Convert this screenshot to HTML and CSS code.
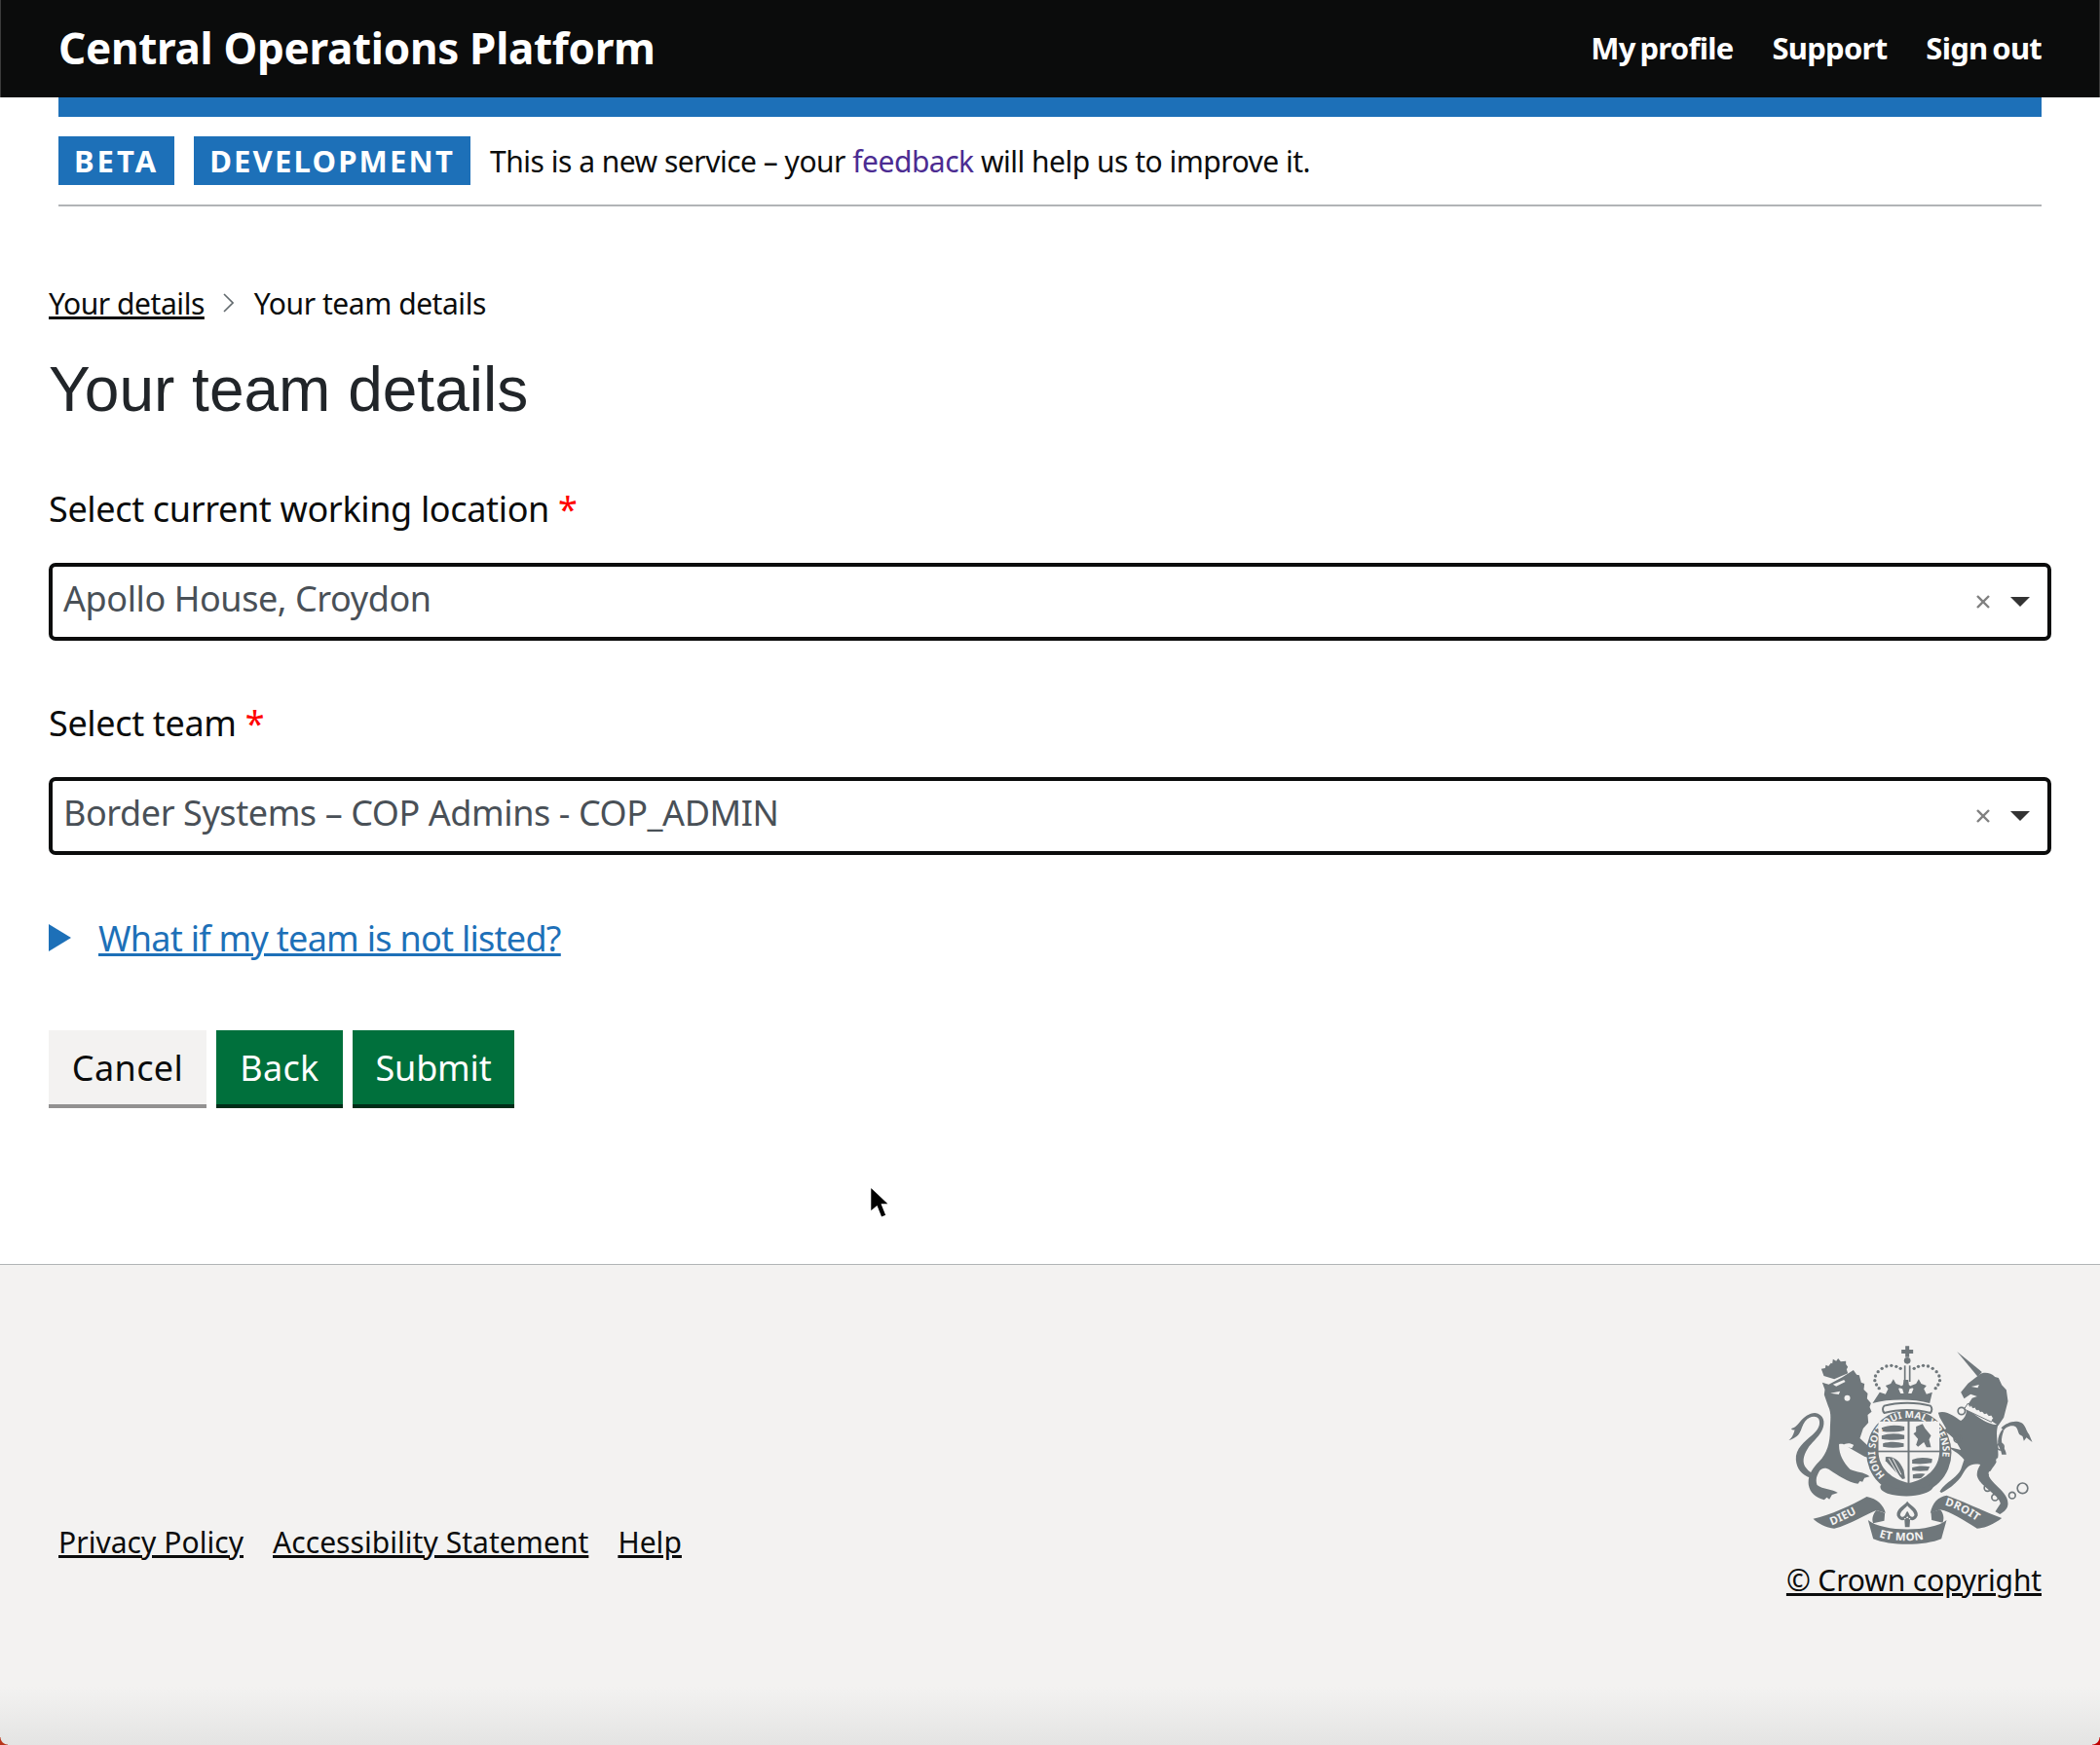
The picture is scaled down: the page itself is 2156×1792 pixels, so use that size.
FILE: index.html
```html
<!DOCTYPE html>
<html lang="en">
<head>
    <meta charset="UTF-8">
    <title>Your team details</title>
    <link rel="stylesheet" href="styles.css">
</head>
<body>
    <header class="site-header">
        <a class="site-title" href="#">Central Operations Platform</a>
        <nav class="site-nav">
            <a href="#">My profile</a>
            <a href="#">Support</a>
            <a href="#">Sign out</a>
        </nav>
    </header>

    <div class="banner-wrap">
        <div class="blue-bar"></div>
        <div class="phase-banner">
            <span class="tag tag-beta">BETA</span>
            <span class="tag">DEVELOPMENT</span>
            <span class="phase-text">This is a new service – your <a href="#">feedback</a> will help us to improve it.</span>
        </div>
    </div>

    <main class="main">
        <div class="breadcrumbs">
            <a href="#">Your details</a>
            <svg class="crumb-arrow" viewBox="0 0 12 20" width="12" height="20"><path d="M2 1l9 9-9 9" fill="none" stroke="#626a6e" stroke-width="1.6"/></svg>
            <span>Your team details</span>
        </div>

        <h1 class="page-title">Your team details</h1>

        <div class="form-group">
            <label class="field-label">Select current working location <span class="required">*</span></label>
            <div class="select-box">
                <span class="select-value">Apollo House, Croydon</span>
                <svg class="select-clear" viewBox="0 0 16 16" width="16" height="16"><path d="M2 2l12 12M14 2L2 14" stroke="#808080" stroke-width="2.4"/></svg>
                <span class="select-caret"></span>
            </div>
        </div>

        <div class="form-group">
            <label class="field-label">Select team <span class="required">*</span></label>
            <div class="select-box">
                <span class="select-value">Border Systems – COP Admins - COP_ADMIN</span>
                <svg class="select-clear" viewBox="0 0 16 16" width="16" height="16"><path d="M2 2l12 12M14 2L2 14" stroke="#808080" stroke-width="2.4"/></svg>
                <span class="select-caret"></span>
            </div>
        </div>

        <div class="details">
            <span class="details-arrow"></span>
            <a href="#">What if my team is not listed?</a>
        </div>

        <div class="button-row">
            <button class="btn btn-grey btn-cancel">Cancel</button>
            <button class="btn btn-green btn-back">Back</button>
            <button class="btn btn-green btn-submit">Submit</button>
        </div>
    </main>

    <footer class="site-footer">
        <div class="footer-links">
            <a href="#">Privacy Policy</a>
            <a href="#">Accessibility Statement</a>
            <a href="#">Help</a>
        </div>
        <div class="footer-crown">
            <svg class="crest" viewBox="50 20 770 630" width="257" height="210">
                <defs>
                    <path id="garterArc" d="M360 432 A104 104 0 1 1 500 432"/>
                    <path id="ribLeft" d="M192 582 C225 570 262 550 300 528"/>
                    <path id="ribMid" d="M338 618 C385 634 465 634 515 614"/>
                    <path id="ribRight" d="M540 520 C580 530 620 556 660 584"/>
                </defs>
                <g fill="#6f777b">
                    <!-- crown -->
                    <path d="M419 30h12v11h12v12h-12v11h-12V53h-12V41h12z"/>
                    <circle cx="425" cy="75" r="10"/>
                    <rect x="415" y="90" width="5" height="50"/>
                    <rect x="430" y="90" width="5" height="50"/>
                    <g class="pearls">
                        <circle cx="404" cy="99" r="5"/><circle cx="391" cy="93" r="5"/><circle cx="376" cy="90" r="5"/><circle cx="361" cy="92" r="5"/><circle cx="347" cy="99" r="5"/><circle cx="335" cy="109" r="5"/><circle cx="327" cy="122" r="5"/><circle cx="325" cy="136" r="5"/><circle cx="330" cy="149" r="5"/><circle cx="338" cy="160" r="5"/>
                        <circle cx="446" cy="99" r="5"/><circle cx="459" cy="93" r="5"/><circle cx="474" cy="90" r="5"/><circle cx="489" cy="92" r="5"/><circle cx="503" cy="99" r="5"/><circle cx="515" cy="109" r="5"/><circle cx="523" cy="122" r="5"/><circle cx="525" cy="136" r="5"/><circle cx="520" cy="149" r="5"/><circle cx="512" cy="160" r="5"/>
                    </g>
                    <path d="M340 172l18 6 8-16-8-10 16-6 8-14 8 14 16 6-8 10 6 14h10l-4-14-12-4 14-8 2-16h14l2 16 14 8-12 4-4 14h10l6-14-8-10 16-6 8-14 8 14 16 6-8 10 8 16 18-6-8 34c-50-14-126-14-176 0z"/>
                    <path d="M354 214c40-12 102-12 142 0 6 6 6 16 0 22-42-12-100-12-142 0-6-6-6-16 0-22z" fill="none" stroke="#6f777b" stroke-width="6"/>

                    <!-- lion crown -->
                    <path d="M168 122l-8-22 12-2 2-10 8 4 8-10 4 2 2-14 10 6 6-8 8 10 16-2 0 10 6 8-4 8 4 12-42 18z"/>
                    <!-- lion body -->
                    <path d="M163 142l20 6 42-22 34-22 10 14 8 2 6 22 10 4-2 18 12 12-2 16 12 14-4 12 6 14-12 10 2 24-16 18-10 30 32 30 8 18-6 14-20-6-42-24c-14-8-22-18-36-14-2 28 12 56 34 78 22 10 40 6 60 22l-16 4-6 12-8-2-6 8c-30-4-64-28-86-42-12-8-24-8-32 2-8 14-14 26-8 44 18 14 48 12 64 24l-18 6-8 14-8-6-8 8c-26-8-44-22-48-46-4-28 12-52 32-72 26-26 34-60 34-96 0-30 6-52-6-76l-12-34 2-16z"/>
                    <!-- lion tail -->
                    <path d="M128 436c-30-8-44-30-46-56-2-34 26-56 50-76 18-14 28-34 20-50-10-12-30-6-42 8-8 10-10 24-18 38-8 12-26 20-32 20 10-6 16-20 18-32-8 2-10-2-10-4 12-2 20-12 26-20 14-18 38-34 56-26 22 10 22 34 10 56-10 18-30 34-42 52-14 22-18 44-4 60 8 10 14 14 26 18z"/>
                    <!-- unicorn horn, head and body -->
                    <path d="M578 47L655 110 642 124Z"/>
                    <path d="M642 122C655 108 680 110 695 125L706 128 716 150 730 165 735 200 722 250 705 275 612 210 625 190 640 185 620 178 600 192 590 172 612 145Z"/>
                    <path d="M605 215C630 245 680 275 705 272 695 300 705 330 705 365 705 395 680 405 676 430 690 460 735 480 735 515 735 530 725 540 710 548L696 540 712 515C705 485 650 465 640 430 638 415 645 405 650 395 620 390 610 400 595 425 585 445 555 470 530 482L525 478C540 450 575 440 590 410L600 380C585 360 570 355 550 340L590 350C575 320 560 300 530 290L545 285 525 250 520 235C545 225 575 250 590 260 605 250 610 235 605 215Z"/>
                    <!-- unicorn tail -->
                    <path d="M714 282c16-16 42-26 62-16 14 8 14 24 24 36l10 24-18-14-8 10-4-14-10-6c-6-12-6-24-18-26-14-2-26 6-30 14z"/>
                    <path d="M722 290c-4 12-8 24-6 36 2 14 12 22 14 38h-14c-2-16-12-24-12-40 0-14 6-28 14-38z"/>
                </g>
                <!-- unicorn collar and chain -->
                <g fill="#f3f2f1">
                    <path d="M612 206l6 10 6-4 2 8 8-2 4 8 8 0 4 6 6-2 6 8 8-2 6 8 8-2 6 10-6 12-84-40z" stroke="#6f777b" stroke-width="3"/>
                    <circle cx="705" cy="382" r="7"/>
                    <circle cx="682" cy="422" r="7"/>
                    <circle cx="706" cy="416" r="5"/>
                    <circle cx="240" cy="190" r="9"/>
                    <path d="M196 148l34-14 4 6-28 14z"/>
                    <path d="M188 175l30-6-4 10z"/>
                    <path d="M254 345l-28-8c10-10 24-8 34-2z"/>
                    <path d="M622 155l24-6-4 10z"/>
                </g>
                <g fill="none" stroke="#6f777b" stroke-width="5">
                    <circle cx="592" cy="230" r="11"/>
                    <circle cx="580" cy="316" r="11"/>
                    <circle cx="712" cy="340" r="10"/>
                    <circle cx="672" cy="467" r="10"/>
                    <circle cx="695" cy="496" r="10"/>
                    <circle cx="748" cy="490" r="10"/>
                    <circle cx="780" cy="468" r="16"/>
                </g>

                <!-- shield and garter -->
                <circle cx="430" cy="358" r="131" fill="#6f777b"/>
                <path d="M336 262H524V352C524 410 480 440 430 452 380 440 336 410 336 352Z" fill="#f3f2f1"/>
                <g fill="#6f777b">
                    <rect x="426" y="258" width="6" height="196"/>
                    <rect x="332" y="352" width="196" height="5"/>
                    <path d="M346 282c20-10 46-10 70-4v12c-24 6-50 6-70 2zM346 306c20-8 46-8 70-2v12c-24 4-50 4-70 0zM350 330c20-6 42-6 64 0v10c-22 4-44 4-64 0z"/>
                    <path d="M452 278l20-8 8 14 18 22-6 12 6 24h-14l-8-16-18 14-6-6 6-18-14-16 8-6z"/>
                    <path d="M440 380c18-8 40-8 62-2l-2 12c-20 4-42 4-60 2zM440 404c18-6 36-6 54-2l-6 12c-16 2-32 2-48 0zM442 426c12-4 26-4 38-2l-12 12c-8 2-16 2-26 2z"/>
                    <path d="M358 372c20-4 40 4 56 40l4 26-8 2-52-56z"/>
                </g>
                <g class="crest-hatch" fill="none" stroke="#f3f2f1" stroke-width="3">
                    <path d="M368 376l32 56M380 376l26 50M358 386l30 44"/>
                </g>
                <text class="crest-garter"><textPath href="#garterArc" startOffset="1%">HONI SOIT QUI MAL Y PENSE</textPath></text>

                <g fill="#6f777b">
                    <!-- buckle -->
                    <path d="M352 452c40 26 104 26 148 4l4 10c-6 10-16 14-28 18-36 12-76 10-112 0-14-6-24-12-22-24z"/>
                    <!-- scroll -->
                    <path d="M135 562C190 550 250 522 300 494 332 500 352 520 358 544L330 536C298 548 250 580 200 592 175 590 150 576 135 562Z"/>
                    <path d="M304 566C350 604 500 604 546 566L530 624C480 646 370 646 320 624Z"/>
                    <path d="M496 544C502 512 520 494 546 490 600 508 660 540 716 560 690 580 660 592 640 592 600 568 560 540 526 534Z"/>
                    <path d="M330 536l26 8-2 24-34 8c-6-14 0-30 10-40zM526 534l-28 8 2 24 34 8c6-14 2-30-8-40z"/>
                    <!-- fleur -->
                    <path d="M425 508c-10 14-34 22-32 44 6 18 24 20 32 2 8 18 26 16 32-2 2-22-22-30-32-44zM416 560h18l-2 28h-14z"/>
                </g>
                <g fill="#f3f2f1">
                    <path d="M425 522c-6 8-20 16-22 28 4 10 14 8 18-6l4-6 4 6c4 14 14 16 18 6-2-12-16-20-22-28z"/>
                </g>
                <g class="crest-motto">
                    <text><textPath href="#ribLeft">DIEU</textPath></text>
                    <text><textPath href="#ribMid">ET MON</textPath></text>
                    <text><textPath href="#ribRight">DROIT</textPath></text>
                </g>
            </svg>
            <a href="#">© Crown copyright</a>
        </div>
    </footer>

    <svg class="cursor" viewBox="0 0 22 34" width="25" height="38"><path d="M2 1v24l6-5 4 10 5-2-4-10h7z" fill="#000" stroke="#fff" stroke-width="1.5"/></svg>
    <span class="corner corner-left"></span>
    <span class="corner corner-right"></span>
</body>
</html>
```

FILE: styles.css
```css
html, body {
    margin: 0;
    padding: 0;
}
body {
    position: relative;
    width: 2156px;
    height: 1792px;
    display: flex;
    flex-direction: column;
    overflow: hidden;
    font-family: "Noto Sans", Arial, sans-serif;
    color: #0b0c0c;
    background-color: white;
}
.site-header {
    height: 100px;
    flex: none;
    display: flex;
    align-items: center;
    justify-content: space-between;
    padding: 0 59px 2px;
    box-sizing: border-box;
    border-left: 1px solid #3c3c3c;
    border-right: 1px solid #3c3c3c;
    background-color: #0b0c0c;
}
.site-header a {
    color: white;
    text-decoration: none;
    font-weight: 700;
}
.site-title {
    font-size: 44px;
    letter-spacing: -0.3px;
}
.site-nav {
    display: flex;
    gap: 40px;
    font-size: 31px;
    letter-spacing: -0.75px;
    word-spacing: -2.5px;
}
.banner-wrap {
    margin: 0 60px;
    flex: none;
}
.blue-bar {
    height: 20px;
    background-color: #1d70b8;
}
.phase-banner {
    display: flex;
    align-items: center;
    height: 90px;
    border-bottom: 2px solid #b1b4b6;
    font-size: 30px;
}
.tag {
    height: 50px;
    line-height: 50px;
    padding: 0 16px;
    margin-right: 20px;
    background-color: #1d70b8;
    color: white;
    font-size: 31px;
    font-weight: 700;
    letter-spacing: 2.2px;
}
.tag-beta {
    letter-spacing: 3px;
}
.phase-text {
    letter-spacing: -0.5px;
}
.phase-text a {
    color: #4c2c92;
    text-decoration: none;
}
.main {
    flex: none;
    padding: 0 50px;
}
.breadcrumbs {
    display: flex;
    align-items: center;
    margin-top: 79px;
    height: 40px;
    font-size: 30px;
    letter-spacing: -0.45px;
}
.breadcrumbs a {
    color: #0b0c0c;
}
.crumb-arrow {
    margin: 0 21px 0 18px;
}
.page-title {
    margin: 27px 0 0;
    height: 84px;
    line-height: 84px;
    font-family: "Liberation Sans", Arial, sans-serif;
    font-size: 64px;
    font-weight: 400;
    color: #212529;
}
.form-group {
    margin-top: 56px;
}
.form-group + .form-group {
    margin-top: 60px;
}
.field-label {
    display: block;
    height: 50px;
    line-height: 50px;
    font-size: 36px;
    letter-spacing: -0.35px;
}
.required {
    color: #ff0000;
}
.select-box {
    display: flex;
    align-items: center;
    box-sizing: border-box;
    height: 80px;
    margin-top: 30px;
    padding: 0 18px 0 11px;
    border: 4px solid #0b0c0c;
    border-radius: 7px;
}
.select-value {
    flex: 1;
    margin-bottom: 8px;
    font-size: 36px;
    letter-spacing: -0.42px;
    color: #495057;
}
.select-clear {
    margin-right: 20px;
}
.select-caret {
    width: 0;
    height: 0;
    border-left: 10px solid transparent;
    border-right: 10px solid transparent;
    border-top: 10px solid #333;
}
.details {
    display: flex;
    align-items: center;
    margin-top: 60px;
    height: 50px;
    font-size: 36px;
    letter-spacing: -0.72px;
}
.details a {
    color: #1d70b8;
}
.details-arrow {
    width: 0;
    height: 0;
    margin-right: 28px;
    border-top: 14px solid transparent;
    border-bottom: 14px solid transparent;
    border-left: 23px solid #1d70b8;
}
.button-row {
    display: flex;
    gap: 10px;
    margin-top: 70px;
}
.btn {
    height: 76px;
    margin-bottom: 4px;
    padding: 0;
    border: none;
    font-family: inherit;
    font-size: 36px;
    cursor: pointer;
}
.btn-grey {
    background-color: #f3f2f1;
    color: #0b0c0c;
    box-shadow: 0 4px 0 #929191;
}
.btn-green {
    background-color: #00703c;
    color: white;
    box-shadow: 0 4px 0 #002d18;
}
.btn-cancel {
    width: 162px;
    letter-spacing: 0.4px;
}
.btn-back {
    width: 130px;
    letter-spacing: 0.3px;
}
.btn-submit {
    width: 166px;
    letter-spacing: -0.2px;
}
.site-footer {
    flex: 1;
    display: flex;
    justify-content: space-between;
    align-items: flex-end;
    margin-top: 160px;
    padding: 0 60px 149px;
    border-top: 1px solid #b1b4b6;
    background: linear-gradient(to bottom, #f3f2f1 calc(100% - 60px), #e4e4e3 100%);
    font-size: 30px;
}
.site-footer a {
    color: #0b0c0c;
}
.footer-links {
    display: flex;
    gap: 30px;
    margin-bottom: 39px;
    letter-spacing: 0.05px;
}
.footer-crown {
    display: flex;
    flex-direction: column;
    align-items: flex-end;
    gap: 13px;
    letter-spacing: -0.15px;
}
.crest {
    display: block;
    margin-right: 6px;
}
.crest-garter {
    fill: #f3f2f1;
    font-family: "Noto Sans", Arial, sans-serif;
    font-size: 30px;
    font-weight: 700;
}
.crest-motto text {
    fill: #f3f2f1;
    font-family: "Noto Sans", Arial, sans-serif;
    font-size: 34px;
    font-weight: 700;
    letter-spacing: 1px;
}
.cursor {
    position: absolute;
    left: 891px;
    top: 1217px;
}
.corner {
    position: absolute;
    bottom: 0;
    width: 8px;
    height: 8px;
}
.corner-left {
    left: 0;
    background: radial-gradient(circle at 100% 0, transparent 7px, #b8351a 8px);
}
.corner-right {
    right: 0;
    background: radial-gradient(circle at 0 0, transparent 7px, #c00000 8px);
}
```
